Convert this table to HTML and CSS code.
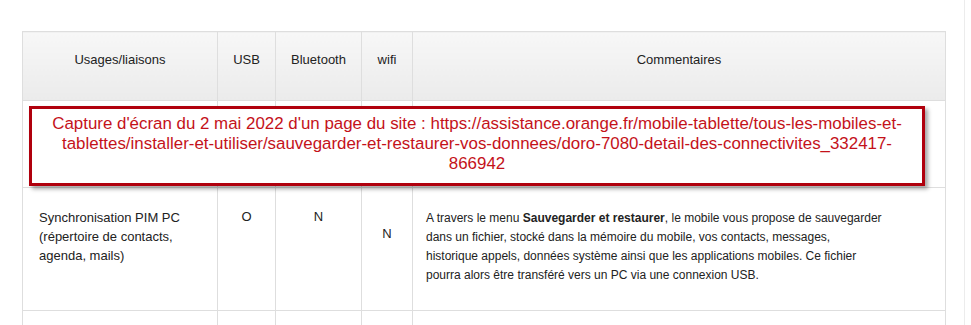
FILE: index.html
```html
<!DOCTYPE html>
<html lang="fr">
<head>
<meta charset="UTF-8">
<meta name="viewport" content="width=device-width, initial-scale=1.0">
<title>Doro 7080 - connectivités</title>
<link rel="stylesheet" href="styles.css">
</head>
<body>

<div class="page">
    <div class="sheet">
        <table class="connect-table">
            <colgroup>
                <col class="col-usage">
                <col class="col-usb">
                <col class="col-bt">
                <col class="col-wifi">
                <col class="col-comment">
            </colgroup>
            <thead>
                <tr>
                    <th>Usages/liaisons</th>
                    <th>USB</th>
                    <th>Bluetooth</th>
                    <th>wifi</th>
                    <th>Commentaires</th>
                </tr>
            </thead>
            <tbody>
                <tr class="row-note">
                    <td></td><td></td><td></td><td></td><td></td>
                </tr>
                <tr class="row-main">
                    <td class="usage">Synchronisation PIM PC (répertoire de contacts, agenda, mails)</td>
                    <td class="flag">O</td>
                    <td class="flag">N</td>
                    <td class="flag low">N</td>
                    <td class="comment">A travers le menu <b>Sauvegarder et restaurer</b>, le mobile vous propose de sauvegarder<br>dans un fichier, stocké dans la mémoire du mobile, vos contacts, messages,<br>historique appels, données système ainsi que les applications mobiles. Ce fichier<br>pourra alors être transféré vers un PC via une connexion USB.</td>
                </tr>
                <tr class="row-next">
                    <td></td><td></td><td></td><td></td><td></td>
                </tr>
            </tbody>
        </table>

        <!-- source note laid over the table -->
        <div class="capture-note">
            Capture d'écran du 2 mai 2022 d'un page du site : https://assistance.orange.fr/mobile-tablette/tous-les-mobiles-et-<br>tablettes/installer-et-utiliser/sauvegarder-et-restaurer-vos-donnees/doro-7080-detail-des-connectivites_332417-<br>866942
        </div>
    </div>
</div>

</body>
</html>
```

FILE: styles.css
```css
body {
    margin: 0;
    padding: 0;
    background-color: #fff;
    font-family: "Liberation Sans", Arial, sans-serif;
    color: #222;
}
.page {
    width: 964px;
    height: 325px;
    overflow: hidden;
    border-right: 1px solid #ececec;
}
.sheet {
    position: relative;
    width: 923px;
    margin: 31px 0 0 22px;
}
.connect-table {
    width: 923px;
    table-layout: fixed;
    border-collapse: collapse;
    font-size: 13px;
}
.col-usage { width: 195px; }
.col-usb { width: 58px; }
.col-bt { width: 86px; }
.col-wifi { width: 51px; }
.col-comment { width: 533px; }

.connect-table th,
.connect-table td {
    border: 1px solid #dedede;
    padding: 0;
    box-sizing: border-box;
}
.connect-table th {
    height: 69px;
    padding-bottom: 13px;
    font-weight: normal;
    text-align: center;
    vertical-align: middle;
    background: linear-gradient(to bottom, #f7f7f7, #ebebeb);
}
.row-note td {
    height: 87px;
}
.row-main td {
    height: 123px;
    vertical-align: top;
    line-height: 19px;
    padding-top: 20px;
}
.row-main td.usage {
    padding-left: 16px;
    padding-right: 10px;
}
.row-main td.flag {
    text-align: center;
    padding-top: 19px;
}
.row-main td.low {
    padding-top: 36px;
}
.row-main td.comment {
    padding-left: 13px;
    padding-top: 21px;
    font-size: 12px;
}
.row-next td {
    height: 40px;
}
.capture-note {
    position: absolute;
    top: 75px;
    left: 7px;
    width: 890px;
    height: 69px;
    border: 3px solid #b0000d;
    box-shadow: 3px 3px 4px rgba(0, 0, 0, 0.35);
    background-color: #fff;
    color: #c4121a;
    font-size: 16.9px;
    line-height: 20px;
    text-align: center;
    padding-top: 5px;
    box-sizing: content-box;
}
```
